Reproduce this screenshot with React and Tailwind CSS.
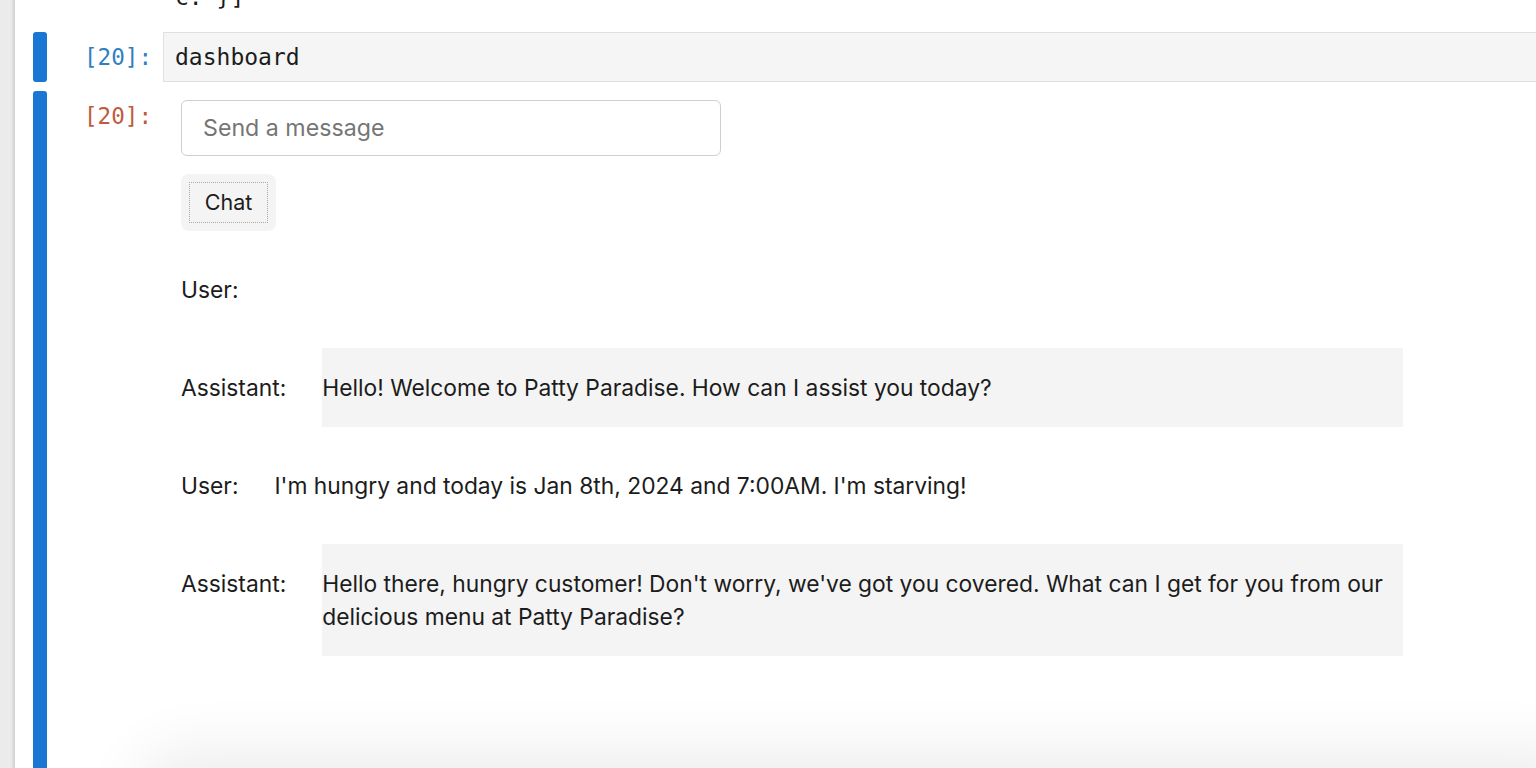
import React from 'react';

const sans = "font-['Inter','Noto_Sans',sans-serif]";
const mono = "font-['DejaVu_Sans_Mono','Liberation_Mono',monospace]";

const messages = [
    { role: 'User', content: '' },
    { role: 'Assistant', content: 'Hello! Welcome to Patty Paradise. How can I assist you today?' },
    { role: 'User', content: "I'm hungry and today is Jan 8th, 2024 and 7:00AM. I'm starving!" },
    {
        role: 'Assistant',
        content: "Hello there, hungry customer! Don't worry, we've got you covered. What can I get for you from our delicious menu at Patty Paradise?",
    },
];

const ChatRow = ({ role, content }) => (
    <div className="flex items-stretch gap-[36px] w-[1222px]">
        <div className="py-[23px] leading-[33px] shrink-0">{role}:</div>
        {role === 'Assistant' ? (
            <div className="flex-1 bg-[#f4f4f4] py-[23px] leading-[33px]">{content}</div>
        ) : (
            <div className="flex-1 py-[23px] leading-[33px]">{content}</div>
        )}
    </div>
);

const App = () => {
    return (
        <div className={`flex h-screen w-full overflow-hidden bg-white text-[#1c1c1c] ${sans}`}>
            {/* left gutter */}
            <div className="w-[15px] shrink-0 bg-[linear-gradient(to_right,#ebebeb_72%,#d0d0d0)]" />

            <div className="relative flex-1 flex flex-col pl-[18px] overflow-hidden">
                {/* tail of previous cell */}
                <div className="h-[32px] flex">
                    <div className="h-[11px] overflow-hidden flex items-end pl-[142px]">
                        <span className={`${mono} text-[23px] leading-[28px] whitespace-pre`}>c. }]</span>
                    </div>
                </div>

                {/* code cell */}
                <div className="flex h-[50px]">
                    <div className="w-[14px] rounded-[3px] bg-[#1976d2] shrink-0" />
                    <div className={`w-[116px] shrink-0 pr-[11px] text-right ${mono} text-[22.6px] leading-[50px] text-[#307fc1]`}>[20]:</div>
                    <div className={`flex-1 -mr-[4px] bg-[#f5f5f5] border border-[#e0e0e0] pl-[11px] ${mono} text-[23px] leading-[48px] text-[#1c1c1c]`}>
                        dashboard
                    </div>
                </div>

                {/* output cell */}
                <div className="flex flex-1 mt-[9px]">
                    <div className="w-[14px] rounded-t-[3px] bg-[#1976d2] shrink-0" />
                    <div className={`w-[116px] shrink-0 pr-[11px] pt-[11px] text-right ${mono} text-[22.6px] leading-[28px] text-[#bf5b3d]`}>[20]:</div>
                    <div className="flex flex-col pt-[9px] pl-[18px] text-[22.8px]">
                        <input
                            type="text"
                            placeholder="Send a message"
                            className="w-[540px] h-[56px] rounded-[6px] border border-[#cfcfcf] bg-white px-[21px] text-[23.2px] placeholder:text-[#757575] outline-none"
                        />
                        <button className="mt-[18px] w-[95px] h-[57px] rounded-[8px] bg-[#f4f4f4] p-[8px]">
                            <span className="flex h-full w-full items-center justify-center border border-dotted border-[#a8a8a8] text-[21.5px]">
                                Chat
                            </span>
                        </button>
                        <div className="flex flex-col gap-[19px] mt-[19px]">
                            {messages.map((m, i) => (
                                <ChatRow key={i} role={m.role} content={m.content} />
                            ))}
                        </div>
                    </div>
                </div>

                {/* shadow of the panel below, fading in at the bottom edge */}
                <div className="pointer-events-none absolute top-full left-[140px] -right-[40px] h-[60px] rounded-[40px] shadow-[0_0_60px_20px_rgba(0,0,0,0.07)]" />
            </div>
        </div>
    );
};

export default App;
